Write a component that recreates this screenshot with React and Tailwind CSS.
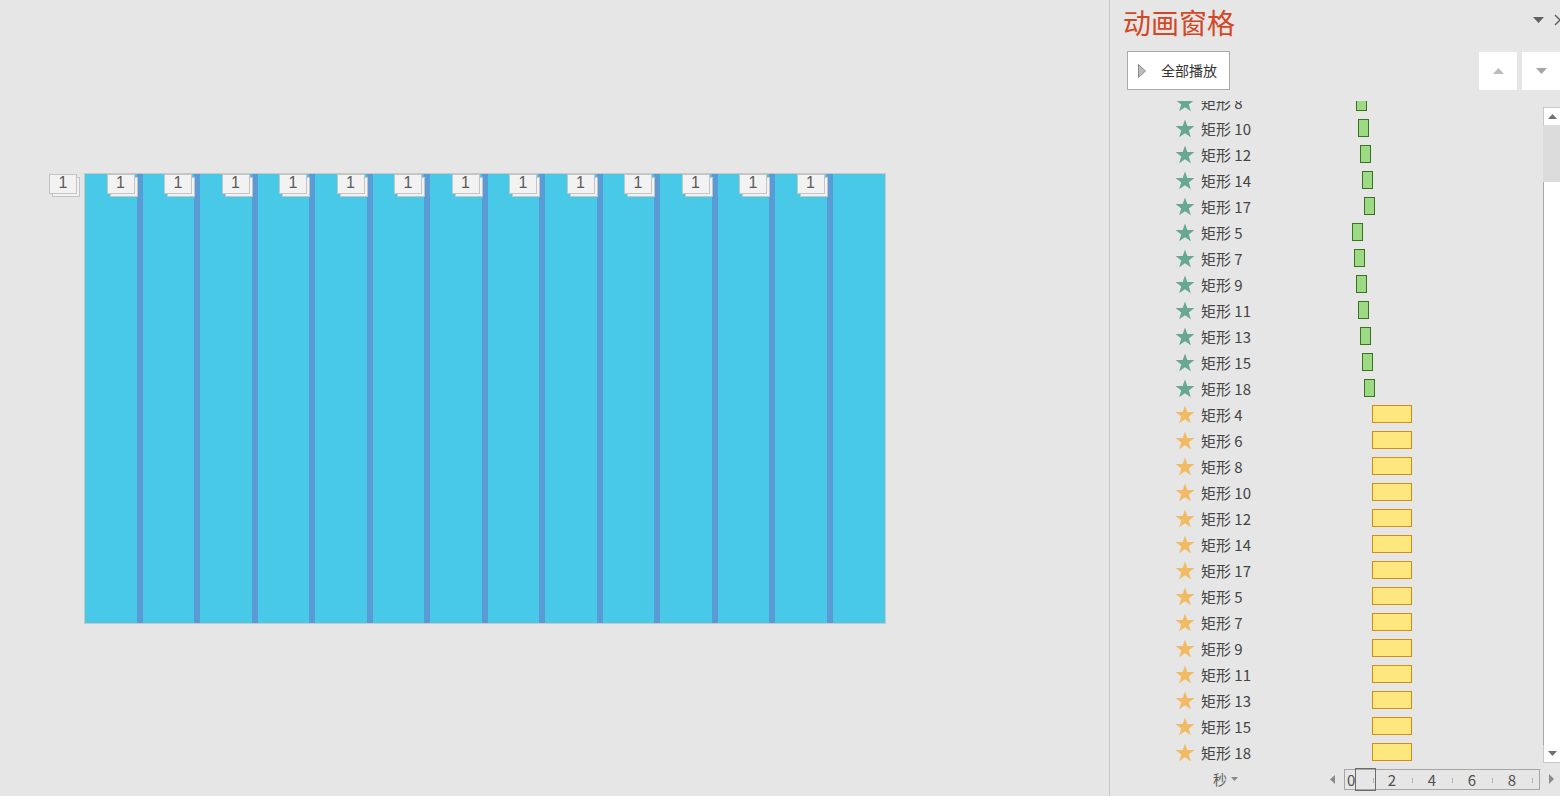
import React from 'react'

const FONT = { fontFamily: '"Noto Sans CJK SC", "Noto Sans", sans-serif' }

const rows = [
  ['矩形 8', 'g', 246],
  ['矩形 10', 'g', 248],
  ['矩形 12', 'g', 250],
  ['矩形 14', 'g', 252],
  ['矩形 17', 'g', 254],
  ['矩形 5', 'g', 242],
  ['矩形 7', 'g', 244],
  ['矩形 9', 'g', 246],
  ['矩形 11', 'g', 248],
  ['矩形 13', 'g', 250],
  ['矩形 15', 'g', 252],
  ['矩形 18', 'g', 254],
  ['矩形 4', 'y', 262],
  ['矩形 6', 'y', 262],
  ['矩形 8', 'y', 262],
  ['矩形 10', 'y', 262],
  ['矩形 12', 'y', 262],
  ['矩形 14', 'y', 262],
  ['矩形 17', 'y', 262],
  ['矩形 5', 'y', 262],
  ['矩形 7', 'y', 262],
  ['矩形 9', 'y', 262],
  ['矩形 11', 'y', 262],
  ['矩形 13', 'y', 262],
  ['矩形 15', 'y', 262],
  ['矩形 18', 'y', 262],
]

function Star({ color }) {
  return (
    <svg width="20" height="19" viewBox="0 0 24 23" className="shrink-0">
      <path d="M12 0.5 L14.8 8.4 L23.4 8.6 L16.6 13.8 L19.1 22.2 L12 17.3 L4.9 22.2 L7.4 13.8 L0.6 8.6 L9.2 8.4 Z" fill={color} />
    </svg>
  )
}

function Badge() {
  return (
    <div className="absolute -left-[36px] top-0 w-[32px] h-[24px]">
      <div className="absolute left-[3px] top-[3px] w-[28px] h-[20px] bg-[#f2f2f2] border border-[#c4c4c4]" />
      <div className="absolute left-0 top-0 w-[28px] h-[20px] bg-[#f2f2f2] border border-[#c4c4c4] flex items-center justify-center text-[16px] leading-none text-[#5a5a5a]" style={{ fontFamily: '"Liberation Sans", sans-serif' }}>
        <span className="-mt-[3px]">1</span>
      </div>
    </div>
  )
}

function Slide() {
  const cols = Array.from({ length: 13 })
  return (
    <div className="w-[802px] h-[451px] border border-[#c8c8c8] bg-[#48c9e8] flex">
      {cols.map((_, i) => (
        <div key={i} className="relative w-[57.5px] shrink-0 border-r-[6px] border-[#5b9bd5]">
          <Badge />
        </div>
      ))}
      <div className="relative flex-1">
        <Badge />
      </div>
    </div>
  )
}

function Row({ label, kind, x }) {
  const green = kind === 'g'
  return (
    <div className="relative h-[26px] flex items-center pl-[65px]">
      <Star color={green ? '#68a892' : '#f1bb66'} />
      <span className="ml-[6px] text-[15px] leading-none text-[#444]">{label}</span>
      <div
        className={
          green
            ? 'absolute top-[4px] w-[11px] h-[18px] bg-[#9cdb84] border border-[#3d7020]'
            : 'absolute top-[4px] w-[40px] h-[18px] bg-[#ffe780] border border-[#d18e12]'
        }
        style={{ left: x }}
      />
    </div>
  )
}

function Tri({ dir, color, w = 11, h = 6 }) {
  const pts = {
    up: `0,${h} ${w / 2},0 ${w},${h}`,
    down: `0,0 ${w},0 ${w / 2},${h}`,
    left: `${w},0 ${w},${h} 0,${h / 2}`,
    right: `0,0 ${w},${h / 2} 0,${h}`,
  }[dir]
  return (
    <svg width={w} height={h} viewBox={`0 0 ${w} ${h}`} className="shrink-0">
      <polygon points={pts} fill={color} />
    </svg>
  )
}

function Timeline() {
  const labels = [['2', 47], ['4', 87], ['6', 127], ['8', 167]]
  const ticks = [28, 67, 107, 147, 187]
  return (
    <div className="h-[26px] flex items-center">
      <div className="ml-[103px] flex items-center gap-[4px] text-[14px] text-[#606060]">
        秒
        <Tri dir="down" color="#8a8a8a" w={7} h={4} />
      </div>
      <div className="ml-[92px]">
        <Tri dir="left" color="#8a8a8a" w={5} h={9} />
      </div>
      <div className="relative ml-[9px] w-[196px] h-[21px] border border-[#a6a6a6] text-[15px] text-[#505050]">
        <span className="absolute left-[2px] top-[-1px] leading-[21px]">0</span>
        <div className="absolute left-[10px] top-[-2px] w-[21px] h-[23px] border border-[#6a6a6a]" />
        {labels.map(([t, l]) => (
          <span key={t} className="absolute top-[-1px] leading-[21px] -translate-x-1/2" style={{ left: l }}>{t}</span>
        ))}
        {ticks.map(l => (
          <div key={l} className="absolute top-[8px] w-px h-[5px] bg-[#b0b0b0]" style={{ left: l }} />
        ))}
      </div>
      <div className="ml-[9px]">
        <Tri dir="right" color="#8a8a8a" w={5} h={10} />
      </div>
    </div>
  )
}

export default function App() {
  return (
    <div className="w-[1560px] h-[796px] bg-[#e6e6e6] flex overflow-hidden" style={FONT}>
      <div className="w-[1109px] shrink-0 pl-[84px] pt-[173px]">
        <Slide />
      </div>
      <div className="w-px shrink-0 bg-[#c6c6c6]" />
      <div className="flex-1 flex flex-col min-w-0">
        <div className="h-[46px] flex items-center justify-between pl-[13px]">
          <span className="text-[28px] leading-none text-[#d24726] -mt-[2px]">动画窗格</span>
          <div className="flex items-center gap-[10px] self-start mt-[14px] -mr-[6px]">
            <Tri dir="down" color="#616161" w={11} h={6} />
            <svg width="12" height="12" viewBox="0 0 12 12">
              <path d="M1 1 L11 11 M11 1 L1 11" stroke="#616161" strokeWidth="1.5" />
            </svg>
          </div>
        </div>
        <div className="mt-[5px] h-[39px] flex items-start">
          <button className="ml-[17px] w-[103px] h-[39px] bg-white border border-[#ababab] flex items-center">
            <svg width="8" height="14" viewBox="0 0 8 14" className="ml-[10px]">
              <polygon points="0.5,0.5 7.5,7 0.5,13.5" fill="#bdbdbd" stroke="#8c8c8c" />
            </svg>
            <span className="ml-[15px] text-[14px] text-[#333] -mt-[1px]">全部播放</span>
          </button>
          <div className="ml-auto flex gap-[5px] mt-[1px]">
            <div className="w-[38px] h-[38px] bg-white flex items-center justify-center">
              <Tri dir="up" color="#bcbcbc" w={11} h={6} />
            </div>
            <div className="w-[38px] h-[38px] bg-white flex items-center justify-center">
              <Tri dir="down" color="#a6a6a6" w={11} h={6} />
            </div>
          </div>
        </div>
        <div className="mt-[11px] h-[665px] flex">
          <div className="flex-1 overflow-hidden">
            <div className="-mt-[12px]">
              {rows.map((r, i) => (
                <Row key={i} label={r[0]} kind={r[1]} x={r[2]} />
              ))}
            </div>
          </div>
          <div className="w-[17px] shrink-0 mt-[6px] mb-[3px] flex flex-col">
            <div className="h-[18px] bg-white border-l border-t border-[#c8c8c8] flex items-center justify-center">
              <Tri dir="up" color="#707070" w={9} h={5} />
            </div>
            <div className="h-[57px] bg-[#dcdcdc]" />
            <div className="flex-1 bg-white border-l border-[#a9a9a9]" />
            <div className="h-[18px] bg-white border-l border-b border-[#c8c8c8] flex items-center justify-center">
              <Tri dir="down" color="#707070" w={9} h={5} />
            </div>
          </div>
        </div>
        <Timeline />
      </div>
    </div>
  )
}
